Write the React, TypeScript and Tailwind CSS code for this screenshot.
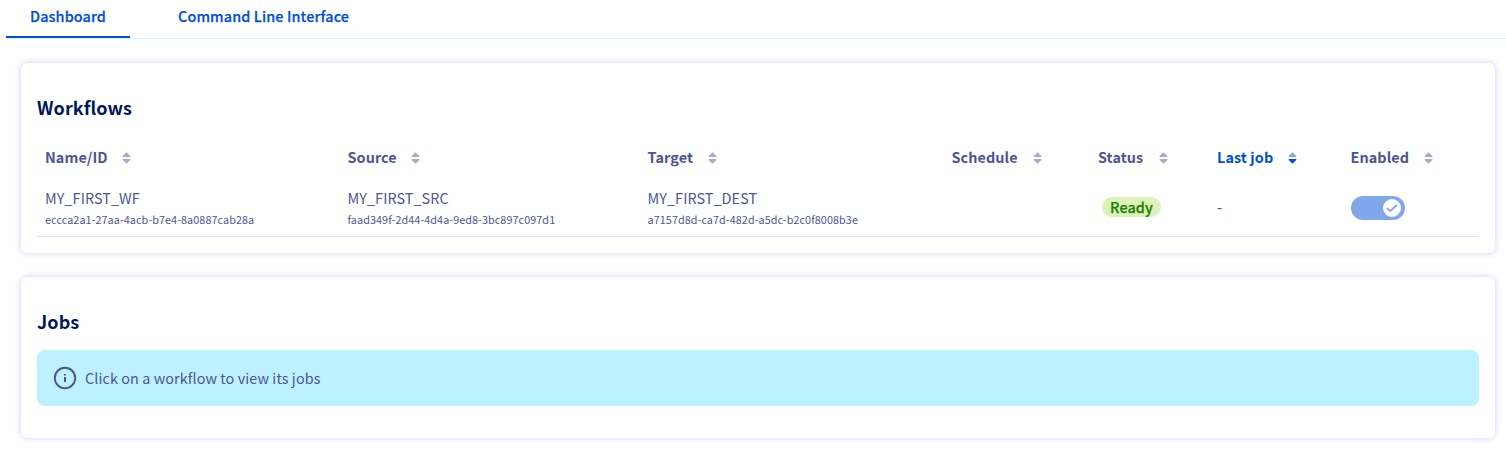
type SortState = "none" | "desc";

interface Column {
  label: string;
  labelWidth: string;
  sort: SortState;
}

const columns: Column[] = [
  { label: "Name/ID", labelWidth: "w-[62px]", sort: "none" },
  { label: "Source", labelWidth: "w-[48.5px]", sort: "none" },
  { label: "Target", labelWidth: "w-[45.5px]", sort: "none" },
  { label: "Schedule", labelWidth: "w-[66px]", sort: "none" },
  { label: "Status", labelWidth: "w-[45.5px]", sort: "none" },
  { label: "Last job", labelWidth: "w-[56px]", sort: "desc" },
  { label: "Enabled", labelWidth: "w-[58px]", sort: "none" },
];

const grid =
  "grid grid-cols-[302.5px_300px_304px_146.5px_119px_133.5px_1fr] pl-2";

function SortIcon({ state }: { state: SortState }) {
  const up = state === "desc" ? "#80a7eb" : "#a6abcb";
  const down = state === "desc" ? "#0050d7" : "#a6abcb";
  return (
    <svg width="9" height="12" viewBox="0 0 9 12" className="shrink-0">
      <path d="M4.5 .3 8.3 4Q8.7 5 7.9 5H1.1Q.3 5 .7 4Z" fill={up} />
      <path d="M4.5 11.7 8.3 8Q8.7 7 7.9 7H1.1Q.3 7 .7 8Z" fill={down} />
    </svg>
  );
}

function Resource({ name, id }: { name: string; id: string }) {
  return (
    <div className="flex flex-col whitespace-nowrap">
      <span className="text-[14.4px] leading-6">{name}</span>
      <span className="text-[10.8px] leading-[18px]">{id}</span>
    </div>
  );
}

function Toggle() {
  return (
    <div className="mt-px flex h-6 w-[54px] items-center justify-end rounded-full bg-[#80a7eb] pr-1">
      <div className="flex h-[18px] w-[18px] items-center justify-center rounded-full bg-white">
        <svg width="12" height="10" viewBox="0 0 12 10" fill="none">
          <path d="M1 5.2 4.2 8 11 1.8" stroke="#80a7eb" strokeWidth="1.8" />
        </svg>
      </div>
    </div>
  );
}

const card =
  "rounded-md bg-white px-4 shadow-[0_0_6px_rgba(0,0,185,0.2)]";

const heading =
  "pt-8 text-[18px] font-bold leading-6 text-[#00185e]";

export default function App() {
  return (
    <div className="h-[452px] overflow-hidden bg-white font-['Noto_Sans_CJK_SC',sans-serif] tracking-[0.08px] text-[#4d5592]">
      <nav className="ml-1.5 flex h-[39px] border-b border-[#d9f4fb] text-[14.4px] font-medium tracking-[0.12px] text-[#0050d7] [-webkit-text-stroke:0.25px]">
        <a className="flex h-[38px] w-[124px] justify-center whitespace-nowrap border-b-2 border-[#0050d7] leading-8">
          Dashboard
        </a>
        <a className="ml-12 whitespace-nowrap leading-8">Command Line Interface</a>
      </nav>

      <main className="flex flex-col gap-6 pl-[21px] pr-[11px] pt-6">
        <section className={`${card} h-[190px]`}>
          <h2 className={heading}>Workflows</h2>
          <div className={`${grid} mt-[25px] h-7 items-center text-[14.4px] font-bold leading-6`}>
            {columns.map((c) => (
              <div
                key={c.label}
                className={
                  c.sort === "desc"
                    ? "flex items-center gap-[15px] whitespace-nowrap text-[#0050d7]"
                    : "flex items-center gap-[15px] whitespace-nowrap"
                }
              >
                <span className={`${c.labelWidth} -mt-0.5`}>{c.label}</span>
                <SortIcon state={c.sort} />
              </div>
            ))}
          </div>
          <div className={`${grid} h-[65px] items-center border-b border-[#e1e1e6] pt-1.5`}>
            <Resource name="MY_FIRST_WF" id="eccca2a1-27aa-4acb-b7e4-8a0887cab28a" />
            <Resource name="MY_FIRST_SRC" id="faad349f-2d44-4d4a-9ed8-3bc897c097d1" />
            <Resource name="MY_FIRST_DEST" id="a7157d8d-ca7d-482d-a5dc-b2c0f8008b3e" />
            <span />
            <span className="ml-1 flex h-5 w-[59px] items-center justify-center rounded-full bg-[#dbf2b9] text-[14.4px] font-medium leading-5 text-[#1f8100] [-webkit-text-stroke:0.25px]">
              Ready
            </span>
            <span className="text-[14.4px] font-medium leading-6">-</span>
            <Toggle />
          </div>
        </section>

        <section className={`${card} h-[161px]`}>
          <h2 className={heading}>Jobs</h2>
          <div className="mt-[17px] flex h-14 items-center gap-2 rounded-lg bg-[#bef1ff] pl-4">
            <svg width="24" height="24" viewBox="0 0 24 24" className="shrink-0">
              <circle cx="12" cy="12" r="10.2" fill="none" stroke="#4d5592" strokeWidth="1.9" />
              <rect x="11" y="8" width="2" height="1.5" fill="#4d5592" />
              <rect x="11" y="11" width="2" height="5" fill="#4d5592" />
            </svg>
            <span className="text-[14.4px] leading-6">Click on a workflow to view its jobs</span>
          </div>
        </section>
      </main>
    </div>
  );
}
